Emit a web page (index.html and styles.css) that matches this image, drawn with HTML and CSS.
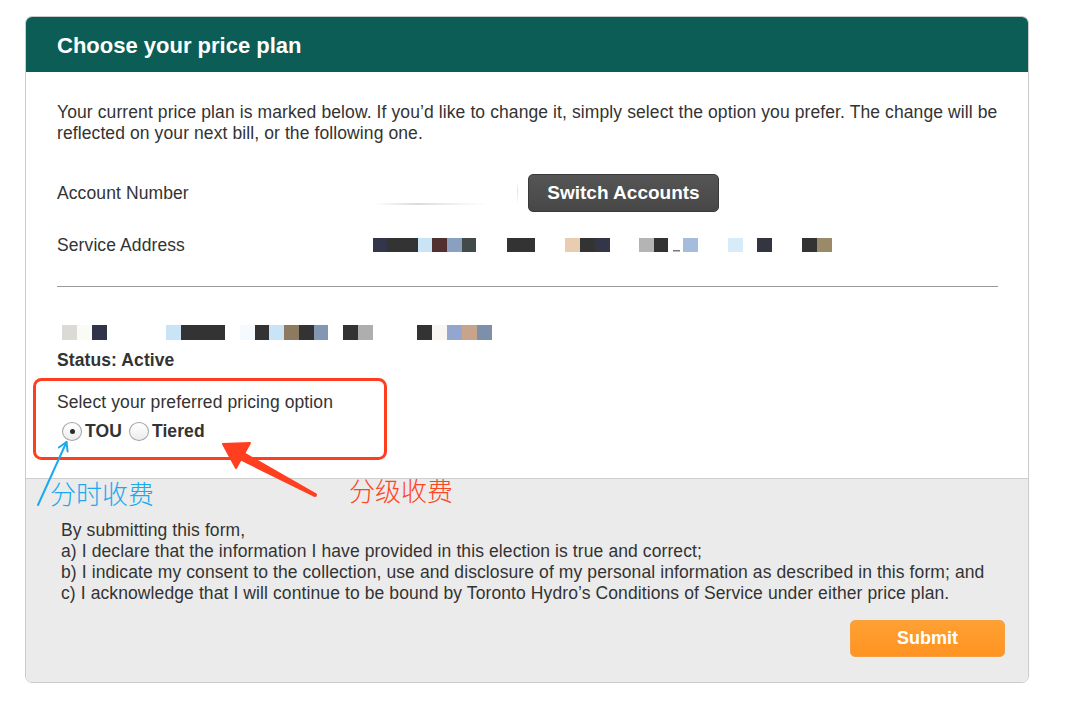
FILE: index.html
```html
<!DOCTYPE html>
<html lang="en">
<head>
<meta charset="utf-8">
<title>Choose your price plan</title>
<link rel="stylesheet" href="styles.css">
</head>
<body>
<div class="page">
  <div class="card">
    <div class="card-head"><h1 class="title">Choose your price plan</h1></div>
    <div class="card-body">
      <p class="intro">Your current price plan is marked below. If you’d like to change it, simply select the option you prefer. The change will be<br>reflected on your next bill, or the following one.</p>
      <div class="row row-account">
        <span class="label">Account Number</span>
        <span class="value">
          <span class="blurred"></span>
          <button class="btn-switch" type="button">Switch Accounts</button>
        </span>
      </div>
      <div class="row row-address">
        <span class="label">Service Address</span>
        <span class="value">
          <svg class="redact" width="460" height="14" viewBox="0 0 460 14">
            <rect x="0" y="0" width="14" height="14" fill="#33364a"/>
            <rect x="14" y="0" width="31" height="14" fill="#333333"/>
            <rect x="45" y="0" width="14" height="14" fill="#c8e4f5"/>
            <rect x="59" y="0" width="15" height="14" fill="#523030"/>
            <rect x="74" y="0" width="15" height="14" fill="#8aa0c0"/>
            <rect x="89" y="0" width="14" height="14" fill="#424a4a"/>
            <rect x="134" y="0" width="28" height="14" fill="#333333"/>
            <rect x="192" y="0" width="15" height="14" fill="#e8cdb0"/>
            <rect x="207" y="0" width="15" height="14" fill="#333333"/>
            <rect x="222" y="0" width="15" height="14" fill="#333548"/>
            <rect x="266" y="0" width="15" height="14" fill="#b4b4b4"/>
            <rect x="281" y="0" width="14" height="14" fill="#333333"/>
            <rect x="300" y="12" width="7" height="1.5" fill="#777777"/>
            <rect x="310" y="0" width="15" height="14" fill="#a5bcdc"/>
            <rect x="355" y="0" width="15" height="14" fill="#d7ebf8"/>
            <rect x="384" y="0" width="15" height="14" fill="#333640"/>
            <rect x="429" y="0" width="15" height="14" fill="#333333"/>
            <rect x="444" y="0" width="15" height="14" fill="#9a8a68"/>
          </svg>
        </span>
      </div>
      <hr class="divider">
      <svg class="redact redact-name" width="430" height="15" viewBox="0 0 430 15">
        <rect x="0" y="0" width="15" height="15" fill="#dcdad5"/>
        <rect x="15" y="0" width="15" height="15" fill="#fbfbf5"/>
        <rect x="30" y="0" width="15" height="15" fill="#30334a"/>
        <rect x="104" y="0" width="15" height="15" fill="#c8e4f6"/>
        <rect x="119" y="0" width="44" height="15" fill="#333333"/>
        <rect x="178" y="0" width="15" height="15" fill="#f4fafe"/>
        <rect x="193" y="0" width="14" height="15" fill="#333333"/>
        <rect x="207" y="0" width="15" height="15" fill="#c8e4f6"/>
        <rect x="222" y="0" width="15" height="15" fill="#8c7b60"/>
        <rect x="237" y="0" width="15" height="15" fill="#333333"/>
        <rect x="252" y="0" width="14" height="15" fill="#8397b5"/>
        <rect x="281" y="0" width="15" height="15" fill="#333333"/>
        <rect x="296" y="0" width="15" height="15" fill="#aeaeae"/>
        <rect x="355" y="0" width="15" height="15" fill="#333333"/>
        <rect x="370" y="0" width="15" height="15" fill="#f8f5f2"/>
        <rect x="385" y="0" width="15" height="15" fill="#93a6cf"/>
        <rect x="400" y="0" width="15" height="15" fill="#c8a48a"/>
        <rect x="415" y="0" width="15" height="15" fill="#7d90aa"/>
      </svg>
      <div class="status">Status: Active</div>
      <div class="pricing">
        <div class="pricing-label">Select your preferred pricing option</div>
        <div class="radios">
          <span class="radio radio-on"></span><span class="radio-text">TOU</span>
          <span class="radio"></span><span class="radio-text">Tiered</span>
        </div>
      </div>
    </div>
    <div class="card-foot">
      <p class="consent">By submitting this form,<br>a) I declare that the information I have provided in this election is true and correct;<br>b) I indicate my consent to the collection, use and disclosure of my personal information as described in this form; and<br>c) I acknowledge that I will continue to be bound by Toronto Hydro’s Conditions of Service under either price plan.</p>
      <div class="actions"><button class="btn-submit" type="button">Submit</button></div>
    </div>
  </div>

  <svg class="annot" width="1080" height="710" viewBox="0 0 1080 710">
    <rect x="34.5" y="379.5" width="351" height="79" rx="7" ry="7" fill="none" stroke="#ff3d1f" stroke-width="3"/>
    <line x1="38" y1="505" x2="66.5" y2="442" stroke="#19aaf0" stroke-width="2" stroke-linecap="round"/>
    <polyline points="58.8,447.5 66.5,442 67.6,451.5" fill="none" stroke="#19aaf0" stroke-width="2" stroke-linecap="round" stroke-linejoin="round"/>
    <polygon points="223,444 250,443 236,468" fill="#ff3f1f" stroke="#ff3f1f" stroke-width="2" stroke-linejoin="round"/>
    <polygon points="237.5,459 242,451 316,493.3 314,496.7" fill="#ff3f1f"/>
    <circle cx="315" cy="495" r="2" fill="#ff3f1f"/>
  </svg>
  <span class="note note-blue">分时收费</span>
  <span class="note note-red">分级收费</span>
</div>
</body>
</html>
```

FILE: styles.css
```css
* {
  box-sizing: border-box;
}

html,
body {
  margin: 0;
  background: #ffffff;
}

body {
  font-family: "Liberation Sans", Arial, Helvetica, sans-serif;
  color: #333333;
}

.page {
  position: relative;
  width: 1080px;
  height: 710px;
  padding: 16px 0 0 25px;
}

.card {
  width: 1004px;
  border: 1px solid #cbcbcb;
  border-radius: 7px;
  overflow: hidden;
  background: #ffffff;
}

.card-head {
  height: 55px;
  background: #0b5d55;
  display: flex;
  align-items: center;
  padding: 2px 0 0 31px;
}

.title {
  margin: 0;
  font-size: 22px;
  font-weight: bold;
  color: #ffffff;
  line-height: 25px;
}

.card-body {
  padding: 30px 30px 36px 31px;
  font-size: 17.5px;
  line-height: 21px;
  letter-spacing: 0.1px;
}

.intro {
  margin: 0;
  white-space: nowrap;
}

.row {
  display: flex;
  align-items: center;
  height: 38px;
}

.row-account {
  margin-top: 30px;
}

.row-address {
  margin-top: 14px;
}

.label {
  width: 316px;
  flex: none;
}

.value {
  display: flex;
  align-items: center;
}

.blurred {
  display: block;
  width: 147px;
  height: 32px;
  margin-right: 8px;
  background:
    linear-gradient(90deg, rgba(200, 200, 200, 0) 0, rgba(190, 190, 190, 0.55) 30%, rgba(200, 200, 200, 0.2) 60%, rgba(220, 220, 220, 0) 80%) left 26px / 100% 2px no-repeat,
    linear-gradient(180deg, rgba(215, 215, 215, 0) 0, rgba(215, 215, 215, 0.7) 40%, rgba(215, 215, 215, 0) 100%) right 2px top 4px / 1px 24px no-repeat;
}

.btn-switch {
  width: 191px;
  height: 38px;
  border: 1px solid #3a3a3a;
  border-radius: 5px;
  background: linear-gradient(#555555, #474747);
  color: #ffffff;
  font-family: "Liberation Sans", Arial, Helvetica, sans-serif;
  font-size: 19px;
  font-weight: bold;
  padding: 0;
}

.redact {
  display: block;
}

.divider {
  margin: 22px 0 0;
  border: 0;
  border-top: 1px solid #9a9a9a;
  height: 0;
}

.redact-name {
  margin: 38px 0 0 5px;
}

.status {
  margin-top: 10px;
  font-weight: bold;
}

.pricing {
  margin-top: 21px;
}

.radios {
  margin-top: 8px;
  display: flex;
  align-items: center;
  padding-left: 5px;
  font-weight: bold;
}

.radio {
  position: relative;
  width: 20px;
  height: 19px;
  border: 1px solid #a3a3a3;
  border-radius: 50%;
  background: linear-gradient(#ffffff, #ececec);
  flex: none;
}

.radio-on::after {
  content: "";
  position: absolute;
  left: 6.5px;
  top: 6px;
  width: 5px;
  height: 5px;
  border-radius: 50%;
  background: #2a2a2a;
}

.radio-text {
  margin-left: 3px;
  margin-right: 7px;
}

.card-foot {
  background: #ebebeb;
  border-top: 1px solid #cfcfcf;
  padding: 41px 23px 25px 35px;
  font-size: 17.5px;
  line-height: 21px;
  letter-spacing: 0.1px;
}

.consent {
  margin: 0;
  white-space: nowrap;
}

.actions {
  display: flex;
  justify-content: flex-end;
  margin-top: 16px;
}

.btn-submit {
  width: 155px;
  height: 37px;
  border: 1px solid #f7a040;
  border-radius: 5px;
  background: linear-gradient(#ffa033, #ff9322);
  color: #ffffff;
  font-family: "Liberation Sans", Arial, Helvetica, sans-serif;
  font-size: 18px;
  font-weight: bold;
  letter-spacing: 0;
  padding: 0;
}

.annot {
  position: absolute;
  left: 0;
  top: 0;
  pointer-events: none;
}

.note {
  position: absolute;
  font-family: "Noto Sans CJK SC", "Noto Sans", sans-serif;
  font-weight: 300;
  font-size: 26px;
  line-height: 26px;
  white-space: nowrap;
}

.note-blue {
  left: 50px;
  top: 480px;
  color: #1aa8ee;
}

.note-red {
  left: 349px;
  top: 477px;
  color: #ff4422;
}
```
